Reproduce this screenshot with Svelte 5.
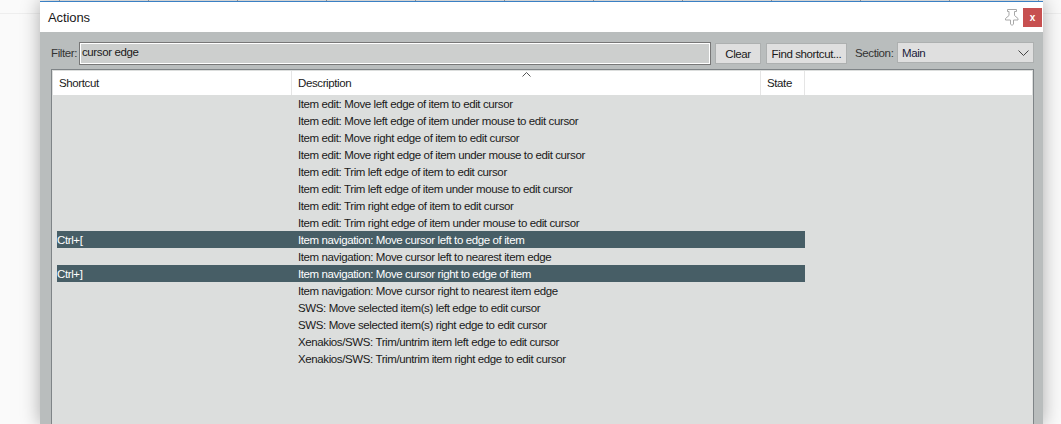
<script>
	const rows = [
		['', 'Item edit: Move left edge of item to edit cursor'],
		['', 'Item edit: Move left edge of item under mouse to edit cursor'],
		['', 'Item edit: Move right edge of item to edit cursor'],
		['', 'Item edit: Move right edge of item under mouse to edit cursor'],
		['', 'Item edit: Trim left edge of item to edit cursor'],
		['', 'Item edit: Trim left edge of item under mouse to edit cursor'],
		['', 'Item edit: Trim right edge of item to edit cursor'],
		['', 'Item edit: Trim right edge of item under mouse to edit cursor'],
		['Ctrl+[', 'Item navigation: Move cursor left to edge of item'],
		['', 'Item navigation: Move cursor left to nearest item edge'],
		['Ctrl+]', 'Item navigation: Move cursor right to edge of item'],
		['', 'Item navigation: Move cursor right to nearest item edge'],
		['', 'SWS: Move selected item(s) left edge to edit cursor'],
		['', 'SWS: Move selected item(s) right edge to edit cursor'],
		['', 'Xenakios/SWS: Trim/untrim item left edge to edit cursor'],
		['', 'Xenakios/SWS: Trim/untrim item right edge to edit cursor']
	];
</script>

<div class="page">
	<div class="ticks"></div>
	<div class="backdrop-line"></div>
	<div class="window">
		<div class="titlebar">
			<span class="title">Actions</span>
			<div class="title-icons">
				<svg class="pin" width="17" height="18" viewBox="0 0 17 18" fill="#fff" stroke="#a8a8a8">
					<path d="M4.500 1.500h9v2h-2v4l3.500 3v1.500h-4.500v4l-1.500 1.500-1.500-1.500v-4h-5v-1.500l3.500-3v-4h-1.500z" />
				</svg>
				<button class="close">x</button>
			</div>
		</div>
		<div class="body">
			<div class="toolbar">
				<span class="label filter-label">Filter:</span>
				<div class="filter">cursor edge</div>
				<button class="btn clear">Clear</button>
				<button class="btn find">Find shortcut...</button>
				<span class="label section">Section:</span>
				<div class="select">
					<span>Main</span>
					<svg width="11" height="6" viewBox="0 0 11 6" fill="none" stroke="#444">
						<path d="M.5.5l5 5 5-5" />
					</svg>
				</div>
			</div>
			<div class="list">
				<div class="head">
					<div class="col c1">Shortcut</div>
					<div class="col c2">
						Description
						<svg class="sort" width="9" height="5" viewBox="0 0 9 5" fill="none" stroke="#555">
							<path d="M.5 4.500l4-4 4 4" />
						</svg>
					</div>
					<div class="col c3">State</div>
				</div>
				{#each rows as [key, desc]}
					<div class="row" class:sel={key}>
						<div class="c1 cell">{key}</div>
						<div class="c2 cell">{desc}</div>
						<div class="c3"></div>
					</div>
				{/each}
			</div>
		</div>
	</div>
</div>

<style>
	:global(body) {
		margin: 0;
		background: #fafafa;
		overflow: hidden;
	}
	.page {
		position: relative;
		height: 424px;
		overflow: hidden;
		font-family: 'Liberation Sans', Arial, sans-serif;
		font-size: 11.5px;
		letter-spacing: -0.39px;
		color: #1a1a1a;
	}
	.ticks {
		position: absolute;
		top: 0;
		left: 59px;
		width: 981px;
		height: 1px;
		background: repeating-linear-gradient(90deg, #a9a9a9 0 1px, transparent 1px 89px);
	}
	.backdrop-line {
		position: absolute;
		top: 13px;
		left: 0;
		right: 0;
		height: 1px;
		background: #eeeeee;
	}
	.window {
		position: relative;
		box-sizing: border-box;
		width: 1003px;
		height: 424px;
		margin: 1px 0 0 40px;
		border-top: 1px solid #3a80c4;
		box-shadow: 0 0 18px rgba(0, 0, 0, 0.32);
		display: flex;
		flex-direction: column;
	}
	.titlebar {
		height: 30px;
		flex: none;
		background: #fff;
		display: flex;
		align-items: center;
		justify-content: space-between;
	}
	.title {
		margin-left: 8px;
		font-size: 13px;
		letter-spacing: -0.1px;
	}
	.title-icons {
		display: flex;
		align-items: center;
		gap: 3px;
		margin-right: 1px;
	}
	.close {
		width: 19px;
		height: 19px;
		padding: 0;
		border: 0;
		background: #c75050;
		color: #fff;
		font: bold 10px 'Liberation Sans', sans-serif;
	}
	.body {
		flex: 1;
		background: #b9bdbd;
		padding: 10px 9px 0 11px;
	}
	.toolbar {
		display: flex;
		align-items: flex-start;
		height: 23px;
	}
	.label {
		color: #333;
		line-height: 23px;
		flex: none;
	}
	.filter-label {
		width: 28px;
	}
	.filter {
		box-sizing: border-box;
		width: 632px;
		height: 23px;
		background: #cdcfce;
		border: 1px solid #777;
		box-shadow: inset 0 0 0 1px #fff;
		padding: 2px 0 0 2px;
		line-height: 15px;
	}
	.btn {
		box-sizing: border-box;
		height: 21px;
		margin-top: 1px;
		padding: 0;
		background: #dfdfdf;
		border: 1px solid #adb0b0;
		color: #1a1a1a;
		font: inherit;
		letter-spacing: inherit;
	}
	.clear {
		width: 46px;
		margin-left: 4px;
	}
	.find {
		width: 81px;
		margin-left: 5px;
	}
	.section {
		margin-left: 8px;
		width: 42px;
	}
	.select {
		box-sizing: border-box;
		width: 137px;
		height: 21px;
		background: #dfdfdf;
		border: 1px solid #adb0b0;
		display: flex;
		align-items: center;
		justify-content: space-between;
		padding: 0 4px 0 4px;
		color: #1a1a3a;
	}
	.list {
		box-sizing: border-box;
		margin-top: 4px;
		height: 400px;
		background: #dcdedd;
		border: 1px solid #7f8487;
		border-bottom: 0;
		padding: 1px 1px 0;
	}
	.head {
		display: flex;
		height: 24px;
		background: #fff;
	}
	.col {
		box-sizing: border-box;
		height: 24px;
		line-height: 24px;
		padding-left: 6px;
		border-right: 1px solid #e5e5e5;
		position: relative;
	}
	.sort {
		position: absolute;
		top: 1px;
		left: 230px;
	}
	.c1 {
		width: 239px;
		flex: none;
	}
	.c2 {
		width: 469px;
		flex: none;
	}
	.c3 {
		width: 44px;
		flex: none;
	}
	.row {
		display: flex;
		width: 748px;
		margin-left: 4px;
		height: 17px;
		line-height: 19px;
	}
	.row .c1 {
		width: 235px;
	}
	.cell {
		box-sizing: border-box;
		height: 17px;
		padding-left: 6px;
		white-space: nowrap;
	}
	.row .c1.cell {
		padding-left: 0;
	}
	.row.sel {
		background: #475e66;
		color: #fff;
	}
</style>
